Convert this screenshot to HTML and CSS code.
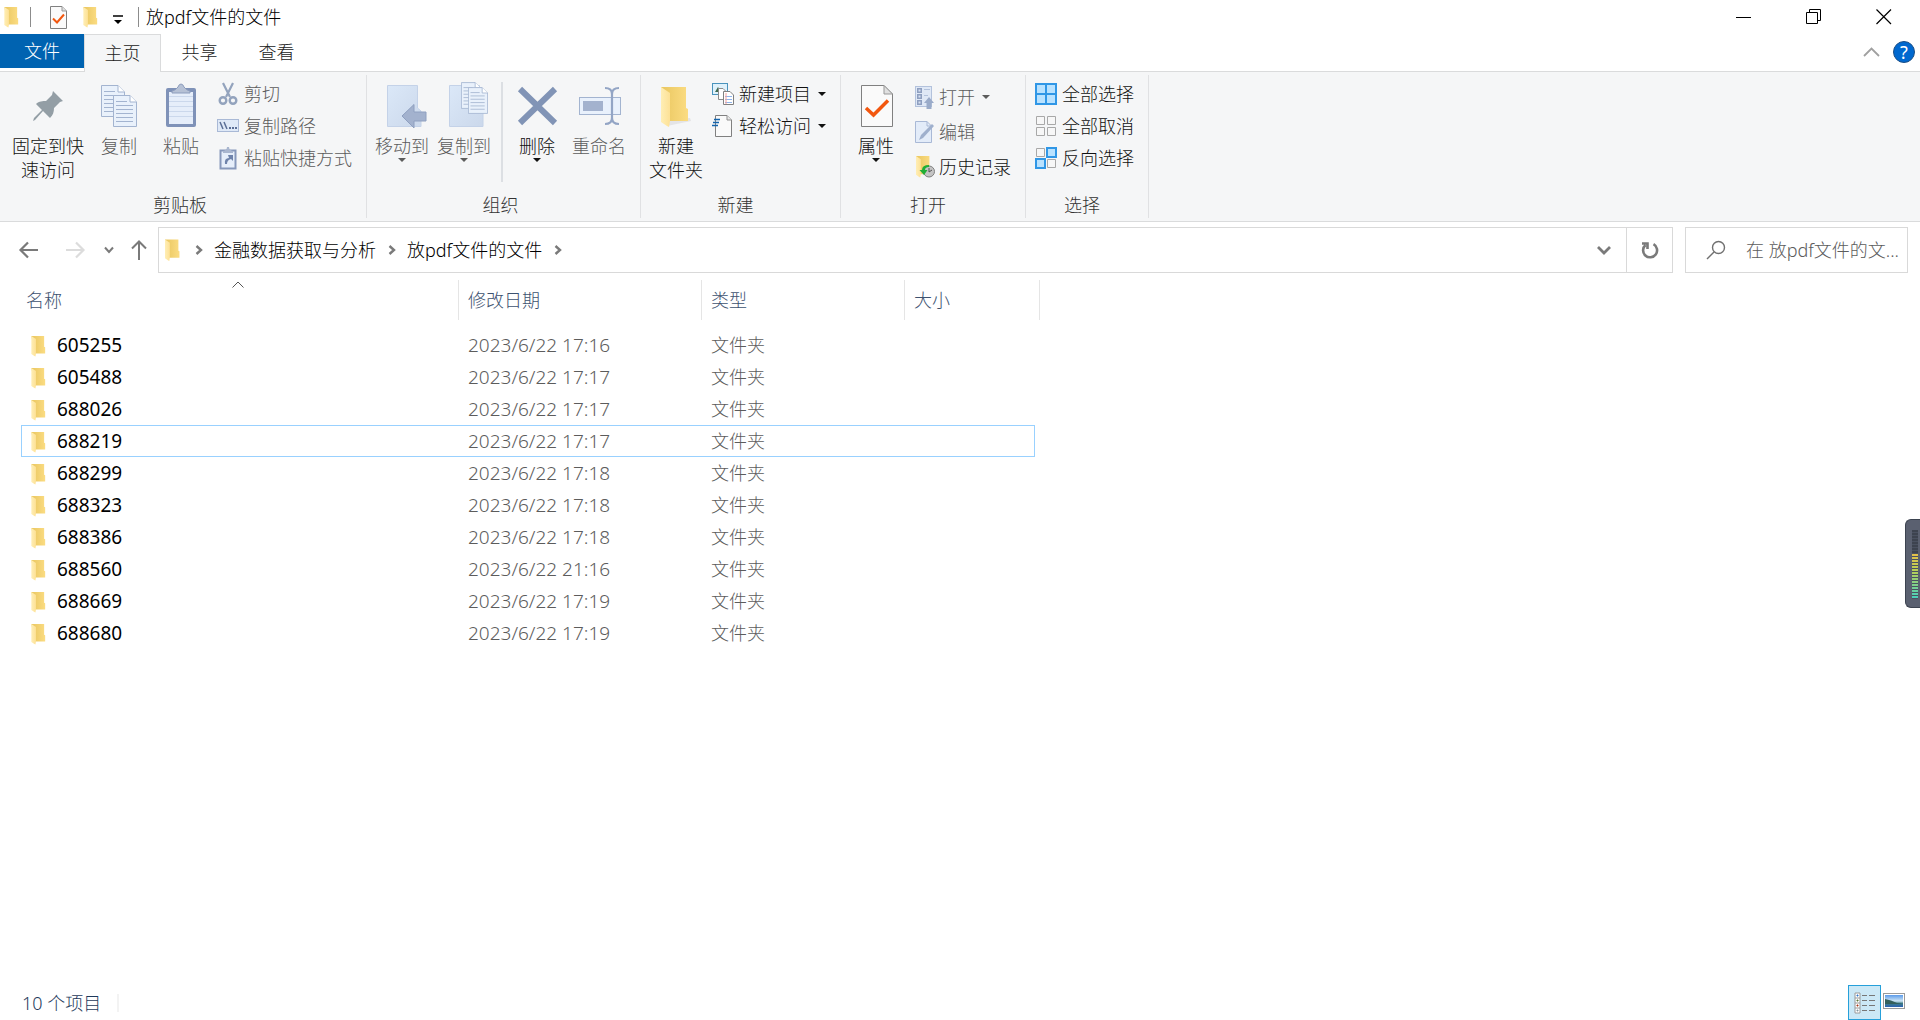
FILE: index.html
```html
<!DOCTYPE html>
<html lang="zh-CN">
<head>
<meta charset="utf-8">
<title>放pdf文件的文件</title>
<link rel="stylesheet" href="styles.css">
</head>
<body>
<svg class="defs" aria-hidden="true">
  <defs>
    <linearGradient id="gBack" x1="0" x2="1"><stop offset="0" stop-color="#e9c65f"/><stop offset="1" stop-color="#fbdc82"/></linearGradient>
    <linearGradient id="gFlap" x1="0" x2="1"><stop offset="0" stop-color="#ffeeb5"/><stop offset="1" stop-color="#fde196"/></linearGradient>
    <linearGradient id="gBlue" x1="0" x2="1" y2="1"><stop offset="0" stop-color="#dbe8f8"/><stop offset="1" stop-color="#cbd8eb"/></linearGradient>
    <linearGradient id="gSky" x2="0" y2="1"><stop offset="0" stop-color="#5b9bea"/><stop offset=".5" stop-color="#cfe6f5"/><stop offset=".7" stop-color="#3f7d86"/><stop offset="1" stop-color="#2b62b5"/></linearGradient>
  </defs>
  <symbol id="folder" viewBox="0 0 28 41">
    <path d="M0 0H25V21L27 22V34H6Z" fill="url(#gBack)"/>
    <path d="M0 0L9 6V34L8 40L6 39L0 35Z" fill="url(#gFlap)"/>
  </symbol>
  <symbol id="sheet" viewBox="0 0 24 32">
    <path d="M.5.5H17L23.500 7V31.500H.5Z" fill="#e9f1fb" stroke="#a3b4d0"/>
    <path d="M17 .5V7H23.500" fill="#fff" stroke="#a3b4d0"/>
    <path d="M3 6.500H14M3 10.500H20M3 14.500H20M3 18.500H20M3 22.500H20M3 26.500H20" stroke="#a3b4d0"/>
  </symbol>
  <symbol id="checked" viewBox="0 0 32 42">
    <path d="M.5.5H23L31.500 9V41.500H.5Z" fill="#fafafa" stroke="#808080"/>
    <path d="M23 .5V9H31.500Z" fill="#e0e0e0" stroke="#999"/>
    <path d="M5 23L12.500 30L27 15.500" fill="none" stroke="#f2570f" stroke-width="3.500"/>
  </symbol>
  <symbol id="down" viewBox="0 0 8 4"><path d="M0 0H8L4 4Z" fill="currentColor"/></symbol>
  <symbol id="chev" viewBox="0 0 8 10"><path d="M1.500 1L6 5L1.500 9" fill="none" stroke="#7a7a7a" stroke-width="2.400"/></symbol>
</svg>

<div class="window">
  <header class="titlebar">
    <svg class="folder-sm" width="15" height="21"><use href="#folder"/></svg>
    <span class="bar"></span>
    <button class="quick" aria-label="属性"><svg width="17" height="23" viewBox="0 0 17 23"><path d="M.5.5H12L16.500 5V22.500H.5Z" fill="#fafafa" stroke="#808080"/><path d="M12 .5V5H16.500" fill="#e0e0e0" stroke="#999"/><path d="M3 12.500L7 16.500L14 8.500" fill="none" stroke="#f2570f" stroke-width="2"/></svg></button>
    <button class="quick" aria-label="新建文件夹"><svg width="15" height="21"><use href="#folder"/></svg></button>
    <button class="quick more" aria-label="自定义快速访问工具栏"><svg width="10" height="9" viewBox="0 0 10 9"><path d="M0 1H10" stroke="#000" stroke-width="1.500"/><path d="M1 5H9L5 9Z"/></svg></button>
    <span class="bar"></span>
    <h1 class="title">放pdf文件的文件</h1>
    <div class="controls">
      <button aria-label="最小化"><svg width="16" height="16"><path d="M0 8.500H15" stroke="#000"/></svg></button>
      <button aria-label="还原"><svg width="16" height="16" fill="none" stroke="#000"><path d="M.5 3.500H11.500V14.500H.5ZM3.500 3V.5H14.500V11.500H12"/></svg></button>
      <button aria-label="关闭"><svg width="16" height="16"><path d="M.5.5L15 15M15 .5L.5 15" stroke="#000" stroke-width="1.200"/></svg></button>
    </div>
  </header>

  <nav class="tabs">
    <button class="tab file">文件</button>
    <button class="tab active">主页</button>
    <button class="tab">共享</button>
    <button class="tab">查看</button>
    <div class="tab-tools">
      <button aria-label="最小化功能区"><svg width="17" height="10" fill="none" stroke="#a0a0a0" stroke-width="1.800"><path d="M1 9L8.500 1.500L16 9"/></svg></button>
      <button class="help" aria-label="帮助">?</button>
    </div>
  </nav>

  <section class="ribbon">
    <div class="group first">
      <div class="tools">
        <button class="big wide"><svg width="44" height="48" viewBox="0 0 44 48"><path d="M27 9L37 19L34 20L28 26C28 30 27 33 24 36L17 29L9 38L7 39L8 36L16 28L10 22C13 19 17 19 20 19L26 13Z" fill="#939ea5"/></svg><span>固定到快<br>速访问</span></button>
        <button class="big off"><svg width="44" height="48" viewBox="0 0 44 48"><use href="#sheet" x="4" y="3" width="24" height="32"/><use href="#sheet" x="16" y="13" width="24" height="32"/></svg><span>复制</span></button>
        <button class="big off"><svg width="44" height="48" viewBox="0 0 44 48"><rect x="7" y="6" width="30" height="39" rx="2" fill="#7f92b8"/><rect x="10" y="10" width="24" height="32" fill="#e6eefa"/><path d="M10 14.500H34M10 19.500H34M10 24.500H34M10 29.500H34M10 34.500H34" stroke="#cbd8ec"/><path d="M13 11V9Q17 8 19 5Q20 2 22 2Q24 2 25 5Q27 8 31 9V11Z" fill="#b6c1d5" stroke="#8c9cbc"/></svg><span>粘贴</span></button>
        <div class="col">
          <button class="small off"><svg width="22" height="24" viewBox="0 0 22 24" fill="none" stroke="#93a3bd"><path d="M6 1L13 15M16 1L9 15" stroke-width="2.200"/><circle cx="6" cy="18.500" r="3.300" stroke-width="2.400"/><circle cx="16" cy="18.500" r="3.300" stroke-width="2.400"/></svg>剪切</button>
          <button class="small off"><svg width="22" height="14" viewBox="0 0 22 14"><rect x=".5" y=".5" width="21" height="12" fill="#dfe9f7" stroke="#a9b9d6"/><path d="M3 3L6 10M7 3L10 10" stroke="#5b6f96" stroke-width="1.500"/><path d="M12 9H14M15 9H17M18 9H20" stroke="#5b6f96" stroke-width="2"/></svg>复制路径</button>
          <button class="small off"><svg width="22" height="24" viewBox="0 0 22 24"><rect x="3.500" y="4.500" width="15" height="18" fill="#e6eefa" stroke="#8798bb" stroke-width="2"/><path d="M6 5Q10 4 10 1H12Q12 4 16 5V7H6Z" fill="#a9b6cf"/><path d="M8 18Q7 12 12 12L11 9H16V15L14 13Q10 14 10 18Z" fill="#6f83ab"/></svg>粘贴快捷方式</button>
        </div>
      </div>
      <div class="caption">剪贴板</div>
    </div>

    <div class="group organize">
      <div class="tools">
        <button class="big off"><svg width="44" height="48" viewBox="0 0 44 48"><path d="M7.500 3.500H37.500V26L41 29V44.500H7.500Z" fill="url(#gBlue)" stroke="#c4d2e8"/><path d="M22 34L34 22.500V30H46V39H34V46Z" fill="#a3b2ce" stroke="#8fa0c0"/></svg><span>移动到</span><svg class="drop" width="8" height="4"><use href="#down"/></svg></button>
        <button class="big off"><svg width="44" height="48" viewBox="0 0 44 48"><path d="M7.500 3.500H37.500V26L41 29V44.500H7.500Z" fill="url(#gBlue)" stroke="#c4d2e8"/><use href="#sheet" x="19" y="0" width="20" height="27"/><use href="#sheet" x="26" y="5" width="20" height="27"/></svg><span>复制到</span><svg class="drop" width="8" height="4"><use href="#down"/></svg></button>
        <span class="divider"></span>
        <button class="big"><svg width="44" height="48" viewBox="0 0 44 48"><path d="M5 7L40 41M40 7L5 41" stroke="#8194b6" stroke-width="6"/></svg><span>删除</span><svg class="drop" width="8" height="4"><use href="#down"/></svg></button>
        <button class="big off"><svg width="44" height="48" viewBox="0 0 44 48"><rect x="2.500" y="15.500" width="41" height="17" fill="#e9f1fc" stroke="#a3b4d0"/><rect x="6" y="19" width="20" height="10" fill="#a3b2ce"/><path d="M28 6Q35 6 35 12V36Q35 42 28 42M42 6Q35 6 35 12V36Q35 42 42 42" fill="none" stroke="#93a5c5" stroke-width="2.200"/></svg><span>重命名</span></button>
      </div>
      <div class="caption">组织</div>
    </div>

    <div class="group">
      <div class="tools">
        <button class="big"><svg width="44" height="48" viewBox="0 0 44 48"><path d="M13 44L37 39L36 36L14 38Z" fill="#e4e4e6"/><use href="#folder" x="7" y="5" width="28" height="41"/></svg><span>新建<br>文件夹</span></button>
        <div class="col">
          <button class="small"><svg width="22" height="24" viewBox="0 0 22 24"><rect x=".5" y="1.500" width="15" height="11" fill="#dff1fb" stroke="#4a93bd"/><path d="M3 10L6 5L9 10Z" fill="#3c6b52"/><path d="M6.500 6.500H11L14.500 10V17.500H6.500Z" fill="#fff" stroke="#8c8c8c"/><path d="M11.500 9.500H18L21.500 13V22.500H11.500Z" fill="#fff" stroke="#808080"/><path d="M13 14.500H20M13 17.500H20M13 20.500H20" stroke="#8fb4ea"/><path d="M14 11V22" stroke="#f4a09a"/></svg>新建项目<svg class="more-arrow" width="8" height="4"><use href="#down"/></svg></button>
          <button class="small"><svg width="22" height="24" viewBox="0 0 22 24"><path d="M3.500 1.500H15L19.500 6V22.500H3.500Z" fill="#fafafa" stroke="#808080"/><path d="M15 1.500V6H19.500" fill="#e8e8e8" stroke="#909090"/><path d="M2 5.500H8M1 8.500H7M0 11.500H6" stroke="#1565ad" stroke-width="1.400"/></svg>轻松访问<svg class="more-arrow" width="8" height="4"><use href="#down"/></svg></button>
        </div>
      </div>
      <div class="caption">新建</div>
    </div>

    <div class="group">
      <div class="tools">
        <button class="big"><svg width="44" height="48" viewBox="0 0 44 48"><use href="#checked" x="7" y="3" width="32" height="42"/></svg><span>属性</span><svg class="drop" width="8" height="4"><use href="#down"/></svg></button>
        <div class="col loose">
          <button class="small off"><svg width="22" height="24" viewBox="0 0 22 24"><rect x="3.500" y="1.500" width="16" height="20" fill="#dfe8f6" stroke="#b3c2dc"/><path d="M5 3H10V8H5ZM5 9H10V14H5ZM5 15H10V20H5Z" fill="#8e9fc0"/><path d="M6.500 4.500H8.500V6.500H6.500ZM6.500 10.500H8.500V12.500H6.500ZM6.500 16.500H8.500V18.500H6.500Z" fill="#d5dff0"/><path d="M12 4.500H18M12 10.500H16" stroke="#b3c2dc"/><path d="M17 12L22 18H19.500V24H14.500V18H12Z" fill="#9aabc9"/></svg>打开<svg class="more-arrow" width="8" height="4"><use href="#down"/></svg></button>
          <button class="small off"><svg width="22" height="24" viewBox="0 0 22 24"><path d="M3.500 1.500H15L19.500 6V22.500H3.500Z" fill="#e3ecf9" stroke="#a9b9d6"/><path d="M15 1.500V6H19.500" fill="none" stroke="#a9b9d6"/><path d="M7 20L9 15L20 4L22 6L11 18Z" fill="#9fb0cd"/></svg>编辑</button>
          <button class="small"><svg width="22" height="24" viewBox="0 0 22 24"><use href="#folder" x="4" y="1" width="15" height="22"/><circle cx="17" cy="16.500" r="5.500" fill="#c4c4c4" stroke="#808080"/><path d="M17 13V17L20 15" fill="none" stroke="#555"/><path d="M17 10Q10 10 10 15H7.500L12 20L15.500 15H13Q13 12 17 12Z" fill="#1fae35"/></svg>历史记录</button>
        </div>
      </div>
      <div class="caption">打开</div>
    </div>

    <div class="group">
      <div class="tools">
        <div class="col select">
          <button class="small"><svg width="22" height="22" viewBox="0 0 22 22"><path d="M1 1H21V21H1ZM11 1V21M1 11H21" fill="#b9e2ff" stroke="#3097e6" stroke-width="2"/></svg>全部选择</button>
          <button class="small"><svg width="22" height="22" viewBox="0 0 22 22"><path d="M1.500 1.500H9.500V9.500H1.500ZM12.500 1.500H20.500V9.500H12.500ZM1.500 12.500H9.500V20.500H1.500ZM12.500 12.500H20.500V20.500H12.500Z" fill="#f7f7f7" stroke="#a8a8a8"/></svg>全部取消</button>
          <button class="small"><svg width="22" height="22" viewBox="0 0 22 22"><path d="M1.500 1.500H9.500V9.500H1.500ZM12.500 12.500H20.500V20.500H12.500Z" fill="#f7f7f7" stroke="#a8a8a8"/><path d="M12 1H21V10H12ZM1 12H10V21H1Z" fill="#b9e2ff" stroke="#3097e6" stroke-width="2"/></svg>反向选择</button>
        </div>
      </div>
      <div class="caption">选择</div>
    </div>
  </section>

  <div class="location">
    <div class="history">
      <button aria-label="后退"><svg width="20" height="18" fill="none" stroke="#7a7a7a" stroke-width="2.200"><path d="M19 9H2M9 1.500L1.500 9L9 16.500"/></svg></button>
      <button aria-label="前进"><svg width="20" height="18" fill="none" stroke="#dcdcdc" stroke-width="2.200"><path d="M1 9H18M11 1.500L18.500 9L11 16.500"/></svg></button>
      <button aria-label="最近浏览的位置"><svg width="10" height="8" fill="none" stroke="#7a7a7a" stroke-width="2"><path d="M1 1.500L5 6L9 1.500"/></svg></button>
      <button aria-label="向上"><svg width="16" height="20" fill="none" stroke="#7a7a7a" stroke-width="2"><path d="M8 20V2M1 8.500L8 1.500L15 8.500"/></svg></button>
    </div>
    <div class="address">
      <svg width="15" height="23"><use href="#folder"/></svg>
      <svg class="step" width="8" height="10"><use href="#chev"/></svg>
      <a href="#">金融数据获取与分析</a>
      <svg class="step" width="8" height="10"><use href="#chev"/></svg>
      <a href="#">放pdf文件的文件</a>
      <svg class="step" width="8" height="10"><use href="#chev"/></svg>
      <button class="recent" aria-label="以前的位置"><svg width="14" height="10" fill="none" stroke="#7a7a7a" stroke-width="2.800"><path d="M1 2L7 8L13 2"/></svg></button>
      <button class="refresh" aria-label="刷新"><svg width="18" height="18" viewBox="0 0 18 18" fill="none" stroke="#7a7a7a" stroke-width="2.600"><path d="M12.500 3.200A7 7 0 1 1 4.500 4M1 2.500H6.500V8"/></svg></button>
    </div>
    <label class="search">
      <svg width="20" height="20" fill="none" stroke="#707070" stroke-width="1.400"><circle cx="12.500" cy="7.500" r="6"/><path d="M8 12L1 19"/></svg>
      <input type="text" placeholder="在 放pdf文件的文..." aria-label="搜索">
    </label>
  </div>

  <main class="files">
    <table>
      <colgroup><col class="c-name"><col class="c-date"><col class="c-type"><col class="c-size"><col class="c-end"></colgroup>
      <thead>
        <tr><th class="sorted">名称<svg class="sort" width="12" height="7" fill="none" stroke="#555"><path d="M.5 6.500L6 1L11.500 6.500"/></svg></th><th>修改日期</th><th>类型</th><th>大小</th><th></th></tr>
      </thead>
      <tbody>
        <tr><td><svg width="15" height="21"><use href="#folder"/></svg>605255</td><td>2023/6/22 17:16</td><td>文件夹</td><td></td></tr>
        <tr><td><svg width="15" height="21"><use href="#folder"/></svg>605488</td><td>2023/6/22 17:17</td><td>文件夹</td><td></td></tr>
        <tr><td><svg width="15" height="21"><use href="#folder"/></svg>688026</td><td>2023/6/22 17:17</td><td>文件夹</td><td></td></tr>
        <tr class="focus"><td><svg width="15" height="21"><use href="#folder"/></svg>688219</td><td>2023/6/22 17:17</td><td>文件夹</td><td></td></tr>
        <tr><td><svg width="15" height="21"><use href="#folder"/></svg>688299</td><td>2023/6/22 17:18</td><td>文件夹</td><td></td></tr>
        <tr><td><svg width="15" height="21"><use href="#folder"/></svg>688323</td><td>2023/6/22 17:18</td><td>文件夹</td><td></td></tr>
        <tr><td><svg width="15" height="21"><use href="#folder"/></svg>688386</td><td>2023/6/22 17:18</td><td>文件夹</td><td></td></tr>
        <tr><td><svg width="15" height="21"><use href="#folder"/></svg>688560</td><td>2023/6/22 21:16</td><td>文件夹</td><td></td></tr>
        <tr><td><svg width="15" height="21"><use href="#folder"/></svg>688669</td><td>2023/6/22 17:19</td><td>文件夹</td><td></td></tr>
        <tr><td><svg width="15" height="21"><use href="#folder"/></svg>688680</td><td>2023/6/22 17:19</td><td>文件夹</td><td></td></tr>
      </tbody>
    </table>
  </main>

  <footer class="status">
    <span class="count">10 个项目</span>
    <div class="views">
      <button class="view on" aria-label="详细信息"><svg width="22" height="22" viewBox="0 0 22 22"><path d="M1 1H6V21H1ZM1 6H6M1 11H6M1 16H6" fill="#fff" stroke="#9a9a9a"/><path d="M8 3.500H13M15 3.500H21M8 8.500H13M15 8.500H21M8 13.500H13M15 13.500H21M8 18.500H13M15 18.500H21" stroke="#777"/><path d="M3 3H4V4H3Z" fill="#2e75c9" stroke="#2e75c9"/><path d="M3 8H4V9H3Z" stroke="#5f7d3a"/><path d="M3 13H4V14H3Z" stroke="#b03a1a"/><path d="M3 18H4V19H3Z" stroke="#8aa0a8"/></svg></button>
      <button class="view" aria-label="大缩略图"><svg width="22" height="16" viewBox="0 0 22 16"><rect x=".5" y=".5" width="21" height="15" fill="#fff" stroke="#9a9a9a"/><rect x="2" y="2" width="18" height="12" fill="url(#gSky)"/><path d="M2 6Q8 7 14 10L20 11H2Z" fill="#35605c"/></svg></button>
    </div>
  </footer>
  <div class="meter"><span></span></div>
</div>
</body>
</html>
```
FILE: styles.css
```css
* { box-sizing: border-box; }

body {
  margin: 0;
  background: #fff;
  color: #000;
  font-family: "Noto Sans", "Noto Sans CJK SC", sans-serif;
  font-size: 18px;
  font-weight: 300;
  line-height: 24px;
}

button {
  margin: 0;
  padding: 0;
  border: 0;
  background: none;
  color: inherit;
  font: inherit;
}

svg { display: block; flex: none; overflow: visible; }
.defs { position: absolute; width: 0; height: 0; }

.window {
  position: relative;
  display: flex;
  flex-direction: column;
  min-height: 100vh;
}

/* Title bar */
.titlebar {
  display: flex;
  align-items: center;
  height: 34px;
  padding-left: 4px;
}
.bar { width: 1px; height: 20px; margin-left: 11px; background: #8c8c8c; }
.quick { margin-left: 16px; }
.quick.more { padding-top: 4px; margin-left: 15px; }
.titlebar .bar + .quick { margin-left: 19px; }
.quick + .bar { margin-left: 15px; }
.title { margin: 0; padding-left: 7px; font-size: 18px; font-weight: 300; }
.controls { display: flex; margin-left: auto; padding-right: 1px; }
.controls button { display: grid; place-items: center; width: 70px; height: 34px; }

/* Ribbon tabs */
.tabs { display: flex; height: 37px; }
.tab { width: 77px; padding-bottom: 2px; color: #222; }
.tab.file { width: 84px; height: 34px; padding: 0; background: #0063b1; color: #fff; }
.tab.active {
  position: relative;
  height: 38px;
  border: 1px solid #dadbdc;
  border-bottom: 0;
  background: #f5f6f7;
}
.tab-tools {
  display: flex;
  align-items: center;
  gap: 13px;
  margin-left: auto;
  padding-right: 5px;
  padding-bottom: 2px;
}
.help {
  width: 22px;
  height: 22px;
  border: 1px solid #1c4f86;
  border-radius: 50%;
  background: #0068cf;
  color: #fff;
  font-weight: 400;
  line-height: 20px;
}

/* Ribbon */
.ribbon {
  display: flex;
  padding: 3px 0;
  border: solid #dadbdc;
  border-width: 1px 0;
  background: #f5f6f7;
  color: #111;
}
.group {
  display: flex;
  flex-direction: column;
  padding: 0 14px 1px 4px;
  border-right: 1px solid #e0e1e3;
}
.group.first { padding-left: 8px; }
.group.organize { padding-right: 10px; }
.tools { display: flex; height: 118px; }
.caption { color: #333; text-align: center; }
.big {
  display: flex;
  flex-direction: column;
  align-items: center;
  width: 62px;
  padding-top: 7px;
}
.big.wide { width: 80px; }
.big span { padding-top: 4px; white-space: nowrap; }
.big .off, .off { color: #5c5c5c; }
.divider { width: 2px; height: 100px; margin: 7px 3px 0 6px; background: #dcdfe3; }
.col { display: flex; flex-direction: column; padding: 3px 0 0 5px; }
.small {
  display: flex;
  align-items: center;
  gap: 5px;
  height: 32px;
  white-space: nowrap;
}
.loose { padding-top: 4px; }
.loose .small { height: 35px; }
.more-arrow { margin-left: 2px; }

/* Navigation and address */
.location {
  display: flex;
  align-items: center;
  padding: 5px 12px 6px 19px;
}
.history { display: flex; align-items: center; width: 139px; }
.history button + button { margin-left: 26px; }
.history button:nth-child(3) { margin-left: 19px; }
.history button:nth-child(4) { margin-left: 17px; }
.address {
  display: flex;
  flex: 1;
  align-items: center;
  height: 46px;
  padding-left: 6px;
  border: 1px solid #d9d9d9;
}
.address a { color: #000; text-decoration: none; }
.step { margin: 0 11px 0 12px; }
.address svg:first-child + .step { margin-left: 15px; }
.recent { display: grid; place-items: center; width: 44px; height: 44px; margin-left: auto; }
.refresh { display: grid; place-items: center; width: 46px; height: 44px; border-left: 1px solid #d9d9d9; }
.search {
  display: flex;
  align-items: center;
  width: 223px;
  height: 46px;
  margin-left: 12px;
  padding-left: 20px;
  border: 1px solid #d9d9d9;
}
.search input {
  flex: 1;
  min-width: 0;
  padding: 0 0 0 20px;
  border: 0;
  outline: 0;
  background: none;
  font: inherit;
}
.search input::placeholder { color: #5c5c5c; opacity: 1; }

/* File list */
.files { padding: 1px 0 0 21px; }
table { width: 1019px; border-spacing: 0; table-layout: fixed; }
.c-name { width: 438px; }
.c-date { width: 243px; }
.c-type { width: 203px; }
.c-size { width: 130px; }
.c-end { width: 5px; }
th {
  height: 40px;
  padding: 0 0 0 9px;
  border-right: 1px solid #e5e5e5;
  color: #3d5270;
  font-weight: 300;
  text-align: left;
}
th:first-child { padding-left: 5px; }
th:nth-child(4) { border-right: 0; }
.sorted { position: relative; }
.sort { position: absolute; top: 1px; left: 211px; }
tbody::before { content: ""; display: block; height: 9px; }
td {
  height: 32px;
  padding: 0 0 0 9px;
  border: solid transparent;
  border-width: 1px 0;
  color: #5c5c5c;
}
td:nth-child(-n+2) { font-size: 19px; }
td:first-child { padding-left: 9px; border-left-width: 1px; color: #000; font-weight: 400; }
td:nth-child(4) { border-right-width: 1px; }
td svg { display: inline-block; margin-right: 11px; vertical-align: middle; }
.focus td { border-color: #99d1ff; }

/* Status bar */
.status {
  display: flex;
  align-items: center;
  height: 35px;
  margin-top: auto;
  padding: 0 13px 0 22px;
  color: #1e395b;
}
.count { padding-right: 16px; border-right: 2px solid #f3f3f3; line-height: 18px; }
.views { display: flex; height: 35px; margin-left: auto; }
.view { display: grid; place-items: center; width: 26px; padding-bottom: 3px; }
.view.on { width: 33px; padding: 0; border: 1px solid #26a0da; background: #cbe8f6; }

/* Level meter docked to the right edge */
.meter {
  position: absolute;
  top: 519px;
  right: 0;
  width: 15px;
  height: 89px;
  padding: 10px 2px 10px 6px;
  border: 1px solid #3c4350;
  border-right: 0;
  border-radius: 6px 0 0 6px;
  background: #5a6070;
}
.meter span {
  display: block;
  height: 69px;
  background:
    repeating-linear-gradient(transparent 0 2px, #4a5160 2px 3px),
    linear-gradient(#3d434f 0 24px, #e5c04a 24px, #b9cf55 40px, #7fd08a 55px, #45d0c0);
}
```
